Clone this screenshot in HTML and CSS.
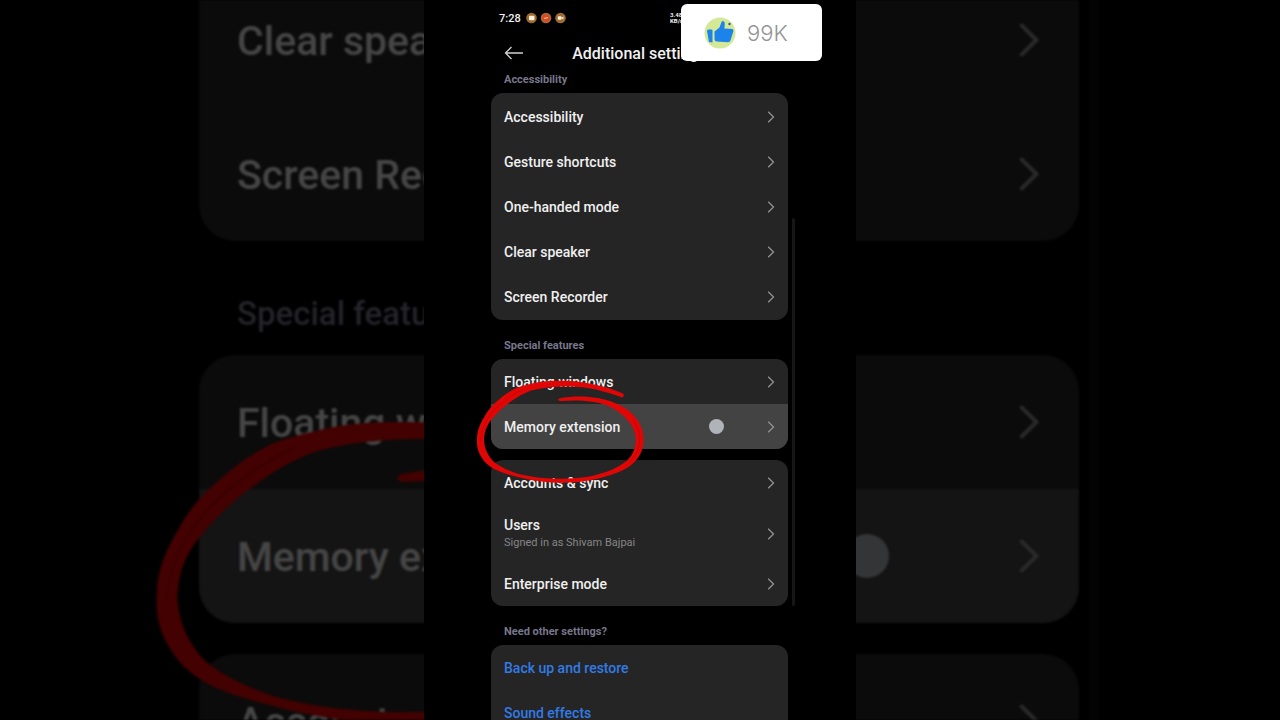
FILE: index.html
```html
<!DOCTYPE html>
<html lang="en">
<head>
<meta charset="utf-8">
<meta name="viewport" content="width=device-width, initial-scale=1">
<title>Additional settings</title>
<link rel="stylesheet" href="styles.css">
</head>
<body>
<svg class="defs" aria-hidden="true">
  <symbol id="chevron" viewBox="0 0 8 12"><path d="M1.2 .8L6.5 6L1.2 11.2" fill="none" stroke="currentColor" stroke-width="1.3"/></symbol>
  <symbol id="ring" viewBox="470 370 190 120">
    <path fill="#e00606" d="M623 393.500C608 387 590 382.500 572 381C560 380.500 549 380.500 539 382C531 383.500 523 385.500 516 388C510 391 504 395 499 399.500C493 404.500 488 410 484.500 416.500C480 424 477 431 477 439C476.500 446 478 452 482 458C485 463 489 466 494 469C501 472.500 508 474.500 516 476.500C541 483.500 568 484 586 481C603 478 620 473 630 466C639 459 644 450 643.500 439C643.500 427 637 416 625 408C612 400 598 397 582 396.500C573 396.500 565 397 559 398.500Q557 400 560 401C580 399.500 595 401 606 405C618 410 628 418 633 428C637 437 637 447 631 456C624 466 605 474 586 477C565 480 540 479 521 474.500C511 472 500 467 493.500 461.500C488 456 484 448 484 439C484.500 431 487 425 491.500 419.500C497 413 503 407 509.500 402.500C516 397.500 523 393.500 531 390.500C554 384.500 580 386 596 389.500C606 392 614 394.500 622 397.500Q625 396 623 393.500Z"/>
    <path fill="none" stroke="#b80000" stroke-width=".7" opacity=".7" d="M480.500 441C481 422 496 403 523 389.500M633 420C644 435 641 452 629 462"/>
  </symbol>
</svg>
<div class="stage">
  <div class="backdrop" aria-hidden="true">
    <div class="big-card">
      <div class="big-row">Clear speaker<svg class="big-chevron"><use href="#chevron"/></svg></div>
      <div class="big-row">Screen Recorder<svg class="big-chevron"><use href="#chevron"/></svg></div>
    </div>
    <div class="big-label">Special features</div>
    <div class="big-card">
      <div class="big-row">Floating windows<svg class="big-chevron"><use href="#chevron"/></svg></div>
      <div class="big-row big-pressed">Memory extension<svg class="big-chevron"><use href="#chevron"/></svg><span class="big-touch"></span><svg class="big-ring"><use href="#ring"/></svg></div>
    </div>
    <div class="big-card big-next">
      <div class="big-row">Accounts &amp; sync<svg class="big-chevron"><use href="#chevron"/></svg></div>
    </div>
    <div class="big-scrollbar"></div>
  </div>

  <main class="phone">
    <div class="status">
      <span class="clock">7:28</span>
      <svg class="apps" viewBox="0 0 40 12" aria-hidden="true">
        <circle cx="5.500" cy="6" r="5.300" fill="#9c6a32"/><rect x="3" y="3.800" width="5.500" height="4.500" rx="1" fill="#fff2d8"/>
        <circle cx="20" cy="6" r="5.300" fill="#a9683c"/><circle cx="20" cy="6" r="3.700" fill="#d84a22"/><path d="M18 6.500L20 6L22 5.500" stroke="#ffc09a" stroke-width="1.200"/>
        <circle cx="34.500" cy="6" r="5.300" fill="#9c6a32"/><rect x="31.800" y="4.300" width="3.700" height="3.500" rx=".8" fill="#fff2d8"/><path d="M35 6L37.500 4.500V7.500Z" fill="#fff2d8"/>
      </svg>
      <span class="speed">3.48<br>KB/s</span>
    </div>
    <header class="header">
      <button class="back" aria-label="Back"><svg class="arrow" viewBox="0 0 20 14" aria-hidden="true"><path d="M19 7H1.500M7.500 1L1.500 7L7.500 13" fill="none" stroke="#d0d0d0" stroke-width="1.300"/></svg></button>
      <h1 class="title">Additional settings</h1>
    </header>
    <h2 class="label label-first">Accessibility</h2>
    <section class="card card-roomy">
      <button class="row">Accessibility<svg class="chevron"><use href="#chevron"/></svg></button>
      <button class="row">Gesture shortcuts<svg class="chevron"><use href="#chevron"/></svg></button>
      <button class="row">One-handed mode<svg class="chevron"><use href="#chevron"/></svg></button>
      <button class="row">Clear speaker<svg class="chevron"><use href="#chevron"/></svg></button>
      <button class="row">Screen Recorder<svg class="chevron"><use href="#chevron"/></svg></button>
    </section>
    <h2 class="label">Special features</h2>
    <section class="card">
      <button class="row">Floating windows<svg class="chevron"><use href="#chevron"/></svg></button>
      <button class="row pressed">Memory extension<svg class="chevron"><use href="#chevron"/></svg><span class="touch"></span><svg class="ring"><use href="#ring"/></svg></button>
    </section>
    <section class="card card-next">
      <button class="row">Accounts &amp; sync<svg class="chevron"><use href="#chevron"/></svg></button>
      <button class="row row-tall"><span class="stack"><span>Users</span><span class="sub">Signed in as Shivam Bajpai</span></span><svg class="chevron"><use href="#chevron"/></svg></button>
      <button class="row">Enterprise mode<svg class="chevron"><use href="#chevron"/></svg></button>
    </section>
    <h2 class="label">Need other settings?</h2>
    <section class="card">
      <a class="row link" href="#backup">Back up and restore</a>
      <a class="row link" href="#sound">Sound effects</a>
    </section>
    <div class="scrollbar"></div>
    <div class="likes">
      <svg class="thumb" viewBox="0 0 32 32" aria-hidden="true">
        <circle cx="16" cy="16" r="15.500" fill="#d3e998"/>
        <path d="M3 14Q3 12.500 4.500 12.500H7.500Q8.500 12.500 8.500 13.500V25.500L5 25Z" fill="#1c83ea"/>
        <path d="M10.500 14.500L15.500 10.500L17.500 5Q18.500 3.500 20 4.500Q21 5.500 20.800 7.500L20.300 11.500L28.500 12Q29.800 12.500 29.300 14.500L26.500 23.500Q26 25.500 23.500 25.300L12.500 24.500Q10.500 24.200 10.500 22Z" fill="#1c83ea"/>
        <circle cx="25.500" cy="7" r="1.200" fill="#315c70"/>
      </svg>
      <span class="count">99K</span>
    </div>
  </main>
</div>
</body>
</html>
```
FILE: styles.css
```css
* { box-sizing: border-box; }
body { margin: 0; background: #000; font-family: Roboto, "Liberation Sans", sans-serif; }
.defs { position: absolute; width: 0; height: 0; }
.stage { position: relative; height: 100vh; overflow: hidden; background: #000; }

/* Dimmed, enlarged copy of the screen behind the phone */
.backdrop { position: absolute; inset: 0; padding: 0 201px 0 199px; opacity: 0.3; filter: blur(1px); overflow: hidden; color: #e8e8e8; font-size: 41px; font-weight: 500; }
.big-card { background: #252525; border-radius: 36px; }
.big-card:first-child { margin-top: -27px; border-radius: 0 0 36px 36px; }
.big-next { margin-top: 31px; }
.big-row { position: relative; display: flex; align-items: center; justify-content: space-between; height: 134px; padding: 2px 38px 0; white-space: nowrap; }
.big-pressed { z-index: 1; background: #434343; border-radius: 0 0 36px 36px; }
.big-chevron { width: 24px; height: 36px; margin-bottom: 3px; color: #8c8c8c; }
.big-label { height: 114px; padding: 53px 38px 0; font-size: 33px; line-height: 40px; color: #77778c; }
.big-touch { position: absolute; right: 190px; top: 45px; width: 44px; height: 44px; border-radius: 50%; background: #b0b3b8; }
.big-ring { position: absolute; left: -63px; top: -99px; width: 563px; height: 356px; }
.big-scrollbar { position: absolute; top: 0; bottom: 0; right: 181px; width: 10px; background: #0c0c0c; }

.phone { position: relative; width: 432px; min-height: 100%; margin: 0 auto; padding: 0 68px 0 67px; background: #000; color: #f0f0f0; }
.status { display: flex; align-items: center; height: 36px; padding-left: 8px; }
.clock { width: 27px; font-size: 11px; font-weight: 500; }
.apps { width: 40px; height: 12px; }
.speed { margin-left: 104px; font-size: 6px; line-height: 6px; font-weight: 700; }
.header { position: relative; display: flex; align-items: center; justify-content: center; height: 35px; }
.back { position: absolute; left: 13px; top: 10px; display: flex; padding: 0; border: 0; background: none; }
.arrow { width: 20px; height: 14px; }
.title { margin: 0; font-size: 16px; font-weight: 500; }
.label { margin: 0; padding: 18px 13px 5px; font-size: 11px; line-height: 16px; font-weight: 700; color: #77778c; }
.label-first { padding-top: 1px; }
.card { background: #252525; border-radius: 12px; }
.card-roomy { padding: 1px 0; }
.card-next { margin-top: 11px; }
.row { position: relative; display: flex; align-items: center; justify-content: space-between; width: 100%; height: 45px; padding: 0 13px; border: 0; background: none; color: inherit; font-family: inherit; font-size: 14px; font-weight: 500; text-align: left; text-decoration: none; }
.row-tall { height: 56px; padding-top: 1px; }
.pressed { z-index: 1; background: #434343; border-radius: 0 0 12px 12px; }
.link { color: #327be5; }
.stack { display: flex; flex-direction: column; line-height: 17px; }
.sub { font-size: 11px; font-weight: 400; color: #858585; }
.chevron { width: 8px; height: 12px; color: #929292; }
.touch { position: absolute; right: 64px; top: 15px; width: 15px; height: 15px; border-radius: 50%; background: #b0b3b8; }
.ring { position: absolute; left: -21px; top: -34px; width: 190px; height: 120px; pointer-events: none; }
.scrollbar { position: absolute; top: 218px; right: 61px; width: 3px; height: 388px; border-radius: 2px; background: #161616; }
.likes { position: absolute; left: 257px; top: 4px; display: flex; align-items: center; gap: 11px; width: 141px; height: 57px; padding-left: 23px; border-radius: 6px; background: #fff; }
.thumb { width: 32px; height: 32px; }
.count { font-family: Inter, sans-serif; font-size: 22px; font-weight: 300; color: #949494; }
```
